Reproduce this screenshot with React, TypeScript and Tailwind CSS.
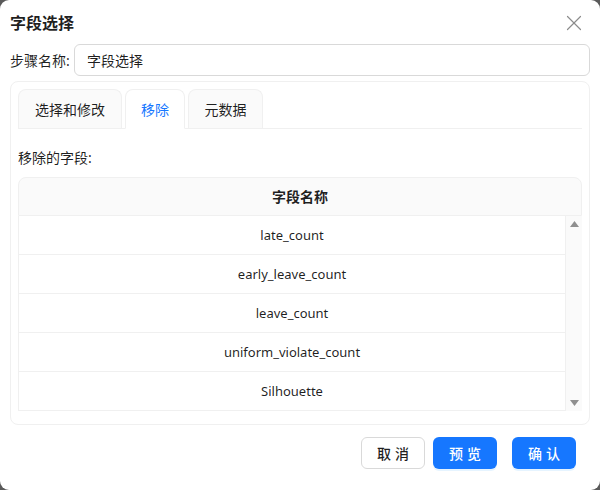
import { X } from "lucide-react";

const removed = ["late_count", "early_leave_count", "leave_count", "uniform_violate_count", "Silhouette"];

const tabs = [
  { label: "选择和修改", active: false, w: "w-[104px]" },
  { label: "移除", active: true, w: "w-[60px]" },
  { label: "元数据", active: false, w: "w-[75px]" },
];

export default function App() {
  return (
    <div
      className="w-[600px] h-[490px] bg-[#5a5a5a] text-[14px] text-[rgba(0,0,0,0.88)]"
      style={{ fontFamily: '"Noto Sans", "Noto Sans CJK SC", sans-serif' }}
    >
      <div className="w-full h-full bg-white rounded-[9px] flex flex-col px-[10px]">
        {/* Header */}
        <div className="h-[44px] flex items-center justify-between">
          <div className="text-[16px] font-bold leading-none pt-[1px]">字段选择</div>
          <X className="w-[26px] h-[26px] text-[#8c8c8c] mr-[3px] mt-[2px]" strokeWidth={1.1} />
        </div>

        {/* Step name */}
        <div className="flex items-center h-[32px]">
          <span className="w-[64px] shrink-0">步骤名称:</span>
          <div className="flex-1 h-[32px] border border-[#d9d9d9] rounded-[6px] flex items-center px-[12px]">
            字段选择
          </div>
        </div>

        {/* Card */}
        <div className="mt-[5px] border border-[#f0f0f0] rounded-[8px] px-[7px] pt-[7px] pb-[13px]">
          <div className="flex items-end h-[40px] border-b border-[#f0f0f0] gap-[3px]">
            {tabs.map((t) => (
              <div
                key={t.label}
                className={
                  t.active
                    ? `${t.w} h-[40px] -mb-px flex items-center justify-center rounded-t-[8px] border border-[#f0f0f0] border-b-white bg-white text-[#1677ff]`
                    : `${t.w} h-[39px] flex items-center justify-center rounded-t-[8px] border border-b-0 border-[#f0f0f0] bg-[#fafafa]`
                }
              >
                {t.label}
              </div>
            ))}
          </div>

          <div className="mt-[18px] leading-[22px]">移除的字段:</div>

          <div className="mt-[8px]">
            <div className="h-[39px] bg-[#fafafa] border border-[#f0f0f0] rounded-t-[8px] flex items-center justify-center font-bold">
              字段名称
            </div>
            <div className="flex">
              <div className="flex-1 border-l border-[#f0f0f0] text-[13px]">
                {removed.map((r) => (
                  <div
                    key={r}
                    className="h-[39px] pt-[2px] border-b border-r border-[#f0f0f0] flex items-center justify-center"
                  >
                    {r}
                  </div>
                ))}
              </div>
              <div className="w-[16px] bg-[#fafafa] flex flex-col items-center justify-between py-[5px]">
                <svg width="9" height="6" viewBox="0 0 9 6">
                  <path d="M4.5 0L9 6H0z" fill="#8f8f8f" />
                </svg>
                <svg width="9" height="6" viewBox="0 0 9 6">
                  <path d="M0 0h9L4.5 6z" fill="#8f8f8f" />
                </svg>
              </div>
            </div>
          </div>
        </div>

        {/* Footer */}
        <div className="flex justify-end items-center mt-[12px] pr-[14px]">
          <button className="w-[64px] h-[32px] rounded-[6px] border border-[#d9d9d9] bg-white font-medium tracking-[4px] pl-[4px]">
            取消
          </button>
          <button className="ml-[8px] w-[64px] h-[32px] rounded-[6px] bg-[#1677ff] text-white font-medium tracking-[4px] pl-[4px] shadow-[0_2px_0_rgba(5,145,255,0.1)]">
            预览
          </button>
          <button className="ml-[15px] w-[64px] h-[32px] rounded-[6px] bg-[#1677ff] text-white font-medium tracking-[4px] pl-[4px] shadow-[0_2px_0_rgba(5,145,255,0.1)]">
            确认
          </button>
        </div>
      </div>
    </div>
  );
}
